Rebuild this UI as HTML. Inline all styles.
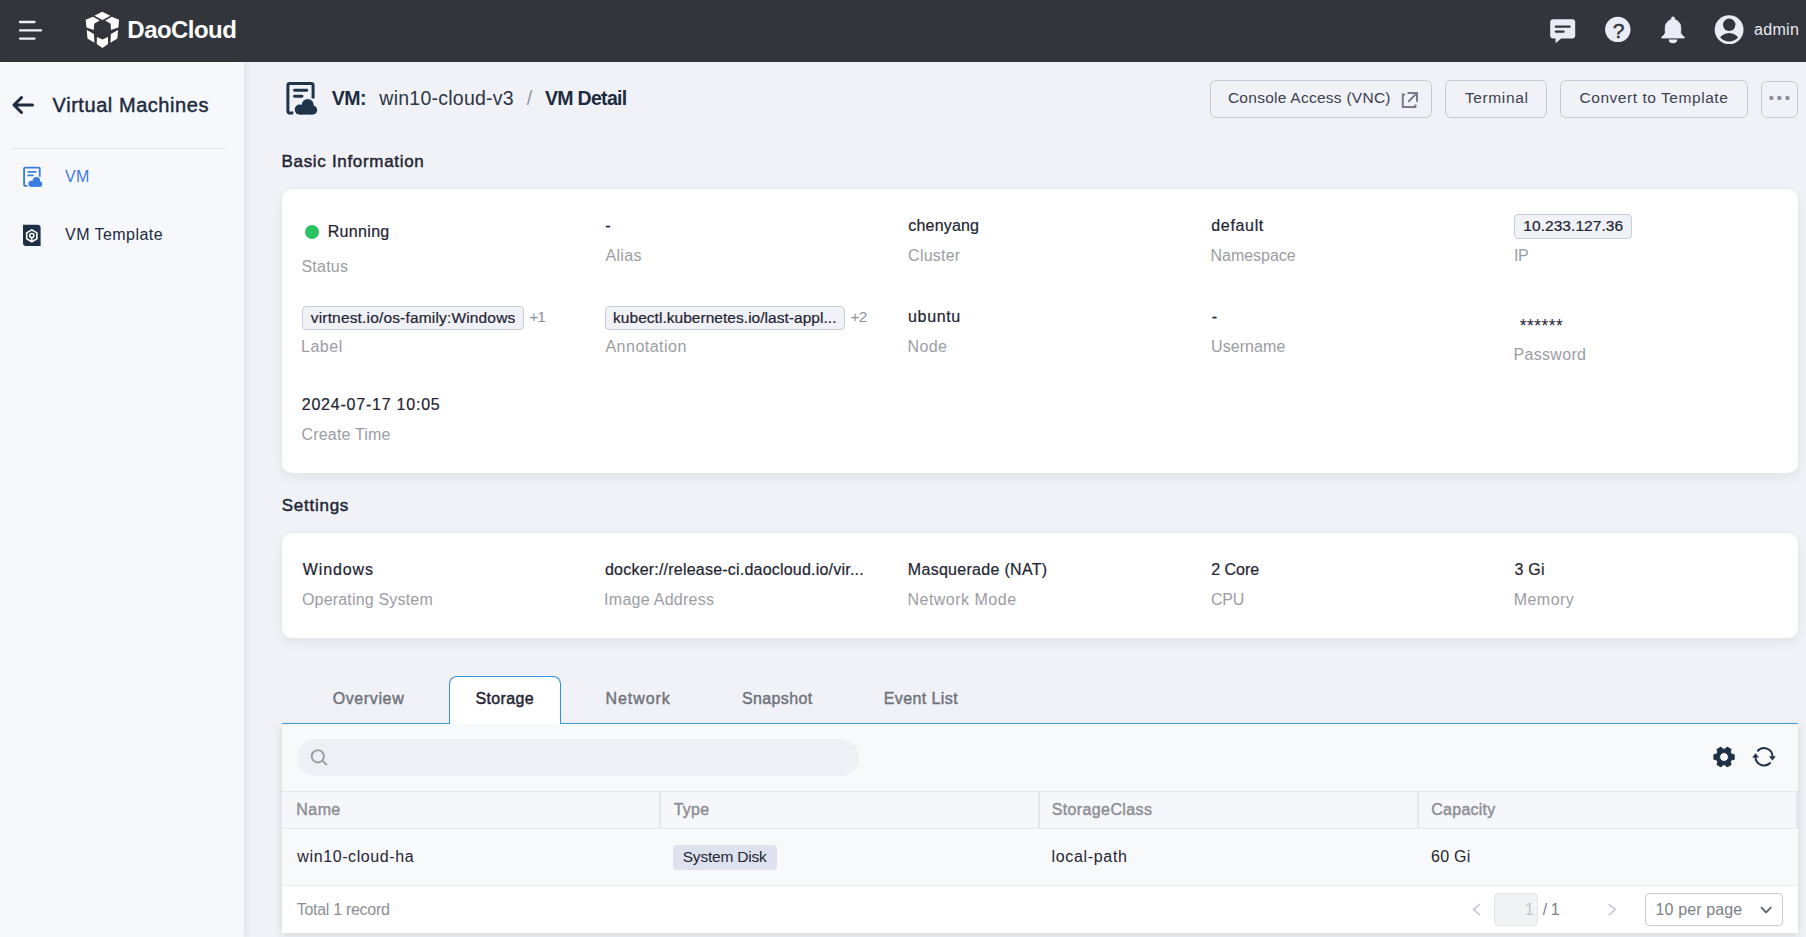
<!DOCTYPE html>
<html lang="en">
<head>
<meta charset="utf-8">
<title>VM Detail - win10-cloud-v3</title>
<style>
html,body{margin:0;padding:0;}
body{width:1806px;height:937px;overflow:hidden;position:relative;background:#f1f2f7;font-family:"Liberation Sans",sans-serif;}
.abs,.t,svg.i{position:absolute;}
.t{line-height:30px;white-space:pre;font-weight:400;}
.t.b{font-weight:700;}
.t.s{-webkit-text-stroke:0.45px currentColor;}
.t.m{-webkit-text-stroke:0.22px currentColor;}
svg.i{left:0;top:0;overflow:visible;pointer-events:none;}
#header{left:0;top:0;width:1806px;height:62px;background:#32353b;}
#sidebar{left:0;top:62px;width:244px;height:875px;background:#f7f8fc;box-shadow:1px 0 7px rgba(20,25,40,.10);}
#sbdiv{left:13px;top:148px;width:212px;height:1px;background:#e2e5eb;}
.btn{box-sizing:border-box;border:1px solid #c7cbd5;border-radius:6px;top:80px;height:38px;}
.card{left:282px;width:1516px;background:#fff;border-radius:10px;box-shadow:0 4px 12px rgba(20,25,40,.07);}
.tag{box-sizing:border-box;border:1px solid #c9cdd7;background:#f1f2f7;border-radius:4px;}
#dot{left:305px;top:224.5px;width:14px;height:14px;border-radius:50%;background:#2ac263;}
#panel{left:282px;top:724px;width:1516px;height:209px;background:#f8f9fb;box-shadow:0 2px 8px rgba(20,25,40,.13);}
#tabline{left:282px;top:723px;width:1516px;height:1px;background:#3d9be0;}
#tabact{box-sizing:border-box;left:449px;top:676px;width:112px;height:48px;background:#fff;border:1px solid #2f93dc;border-bottom:0;border-radius:8px 8px 0 0;}
#search{left:297px;top:739px;width:562px;height:36.8px;border-radius:18.4px;background:#eef0f5;}
.hl{left:282px;width:1516px;height:1px;background:#e4e7ed;}
.vl{top:792px;width:2px;height:36px;background:#e4e7ed;}
#foot{left:282px;top:886px;width:1516px;height:47px;background:#fff;}
#sdtag{left:673px;top:845px;width:104px;height:25px;border-radius:4px;background:#dde2ee;}
#pgbox{box-sizing:border-box;left:1494px;top:893px;width:44px;height:32.5px;border:1px solid #e2e4e9;background:#f1f2f4;border-radius:4px;}
#pgsel{box-sizing:border-box;left:1645px;top:893px;width:138px;height:32.5px;border:1px solid #c7cbd5;background:#fff;border-radius:4px;}
</style>
</head>
<body>
<div id="header" class="abs"></div>
<div id="sidebar" class="abs"></div>
<div id="sbdiv" class="abs"></div>

<div class="abs btn" style="left:1210px;width:222px"></div>
<div class="abs btn" style="left:1445px;width:102px"></div>
<div class="abs btn" style="left:1560px;width:188px"></div>
<div class="abs btn" style="left:1761px;width:37px;top:81px;height:36.5px"></div>

<div class="abs card" style="top:189px;height:284px"></div>
<div class="abs card" style="top:533px;height:105px"></div>
<div id="dot" class="abs"></div>
<div class="abs tag" style="left:1514px;top:214px;width:118px;height:24.6px"></div>
<div class="abs tag" style="left:302px;top:306px;width:222px;height:24px"></div>
<div class="abs tag" style="left:605px;top:306px;width:240px;height:24px"></div>

<div id="panel" class="abs"></div>
<div id="tabline" class="abs"></div>
<div id="tabact" class="abs"></div>
<div id="search" class="abs"></div>
<div class="abs" style="left:282px;top:792px;width:1516px;height:36px;background:#f6f7fa"></div>
<div class="abs hl" style="top:791px"></div>
<div class="abs hl" style="top:828px"></div>
<div class="abs vl" style="left:659px"></div>
<div class="abs vl" style="left:1038px"></div>
<div class="abs vl" style="left:1417px"></div>
<div class="abs vl" style="left:1796px"></div>
<div id="foot" class="abs"></div>
<div class="abs hl" style="top:885px;background:#e9ebf0"></div>
<div id="sdtag" class="abs"></div>
<div id="pgbox" class="abs"></div>
<div id="pgsel" class="abs"></div>

<svg class="i" width="1806" height="937" viewBox="0 0 1806 937">
<!-- hamburger -->
<g stroke="#eef0f6" stroke-width="2.3" stroke-linecap="round">
<path d="M20,22H34.5M20,30.4H41M20,38.6H34.5"/>
</g>
<!-- logo cube -->
<g fill="#ffffff" transform="translate(76,4) scale(0.0997)">
<polygon points="262,78 345,118 265,160 185,118"/>
<polygon points="97,158 170,128 238,165 182,198 178,262 105,235"/>
<polygon points="432,158 358,128 292,165 348,198 350,262 425,235"/>
<polygon points="108,262 180,300 185,388 115,345"/>
<polygon points="422,262 350,300 345,388 415,345"/>
<polygon points="210,330 265,355 320,330 322,400 265,442 208,400"/>
</g>
<!-- chat -->
<path fill="#e9ecf5" d="M1553.2,19.2H1572.2a3,3 0 0 1 3,3V35.6a3,3 0 0 1 -3,3H1561.2L1555.6,43.2V38.6H1553.2a3,3 0 0 1 -3,-3V22.2a3,3 0 0 1 3,-3Z"/>
<path stroke="#32353b" stroke-width="2.2" stroke-linecap="round" fill="none" d="M1555.8,26.7H1569.6M1555.8,31.6H1563.6"/>
<!-- help -->
<circle cx="1617.8" cy="29.4" r="12.7" fill="#e9ecf5"/>
<!-- bell -->
<g fill="#e9ecf5" stroke="#e9ecf5" stroke-width="1" stroke-linejoin="round" transform="translate(1673,0)">
<path d="M0,17.1c1,0 1.7,0.7 1.7,1.7v0.9c3.6,0.9 6,4.1 6,8.1v4.6c0,1 0.4,1.9 1.1,2.6l2.6,2.3v0.6h-22.8v-0.6l2.6,-2.3c0.7,-0.7 1.1,-1.6 1.1,-2.6v-4.6c0,-4 2.4,-7.2 6,-8.1v-0.9c0,-1 0.7,-1.7 1.7,-1.7z"/>
<path stroke="none" d="M-4.25,39.6h8.5a4.25,3.6 0 0 1 -8.5,0z"/>
</g>
<!-- user -->
<clipPath id="uc"><circle cx="1729.1" cy="29.7" r="11.9"/></clipPath>
<circle cx="1729.1" cy="29.7" r="14.4" fill="#e9ecf5"/>
<circle cx="1729.2" cy="24.8" r="6.2" fill="#32353b"/>
<ellipse cx="1729.1" cy="42.2" rx="10.6" ry="9.1" fill="#32353b" clip-path="url(#uc)"/>

<!-- back arrow -->
<path stroke="#1c2b40" stroke-width="3" stroke-linecap="round" stroke-linejoin="round" fill="none" d="M32.5,105H14M21.5,97.5L14,105L21.5,112.5"/>

<!-- title VM icon -->
<g id="vmicon">
<path fill="none" stroke="currentColor" stroke-width="3" d="M293.3,113.1H289.7a1.8,1.8 0 0 1 -1.8,-1.8V85.4a1.8,1.8 0 0 1 1.8,-1.8H311.3a1.8,1.8 0 0 1 1.8,1.8V98.4" style="color:#20344a"/>
</g>
<path fill="none" stroke="#20344a" stroke-width="2.9" stroke-linecap="round" d="M294.5,90.3H306.8M294.5,96.2H302"/>
<g fill="#20344a" stroke="#f1f2f7" stroke-width="0">
<circle cx="307.7" cy="104.9" r="6"/><circle cx="299.7" cy="109.6" r="5"/><circle cx="312.6" cy="110" r="4.6"/><rect x="299.7" y="107" width="12.9" height="7.6"/>
</g>

<!-- sidebar VM icon -->
<g transform="translate(-154.4,115.8) scale(0.62)">
<path fill="none" stroke="#3b7de0" stroke-width="3" d="M293.3,113.1H289.7a1.8,1.8 0 0 1 -1.8,-1.8V85.4a1.8,1.8 0 0 1 1.8,-1.8H311.3a1.8,1.8 0 0 1 1.8,1.8V98.4"/>
<path fill="none" stroke="#3b7de0" stroke-width="2.9" stroke-linecap="round" d="M294.5,90.3H306.8M294.5,96.2H302"/>
<g fill="#3b7de0"><circle cx="307.7" cy="104.9" r="6"/><circle cx="299.7" cy="109.6" r="5"/><circle cx="312.6" cy="110" r="4.6"/><rect x="299.7" y="107" width="12.9" height="7.6"/></g>
</g>

<!-- sidebar template icon -->
<path fill="#1f3044" d="M23,224.8H37.6a3,3 0 0 1 3,3V245.9H26a3,3 0 0 1 -3,-3Z"/>
<path fill="none" stroke="#fff" stroke-width="1.6" stroke-linejoin="round" d="M31.8,229.9L36.9,232.85V238.75L31.8,241.7L26.7,238.75V232.85Z"/>
<circle cx="31.8" cy="235.5" r="2.1" fill="none" stroke="#fff" stroke-width="1.5"/>
<path stroke="#fff" stroke-width="1.4" d="M31.8,237.6V241.5"/>

<!-- external link -->
<path fill="none" stroke="#767d88" stroke-width="2" d="M1405.1,94.6H1402.8V107H1415.4V104.4M1407.5,93H1417V101.8M1416.6,93.4L1408.3,101.7"/>
<!-- more dots -->
<g fill="#8a909c"><circle cx="1771.4" cy="98" r="2.2"/><circle cx="1779.4" cy="98" r="2.2"/><circle cx="1787.5" cy="98" r="2.2"/></g>

<!-- search -->
<g fill="none" stroke="#9ba0aa" stroke-width="2" stroke-linecap="round"><circle cx="317.8" cy="756.3" r="6.1"/><path d="M322.4,760.7L326.3,764.4"/></g>
<!-- gear -->
<path fill="#1f3146" stroke="#1f3146" stroke-width="1" stroke-linejoin="round" fill-rule="evenodd" d="M1731.37,754.04 L1734.18,754.66 L1734.18,759.34 L1731.37,759.96 L1730.28,761.86 L1731.14,764.61 L1727.09,766.95 L1725.15,764.82 L1722.95,764.82 L1721.01,766.95 L1716.96,764.61 L1717.82,761.86 L1716.73,759.96 L1713.92,759.34 L1713.92,754.66 L1716.73,754.04 L1717.82,752.14 L1716.96,749.39 L1721.01,747.05 L1722.95,749.18 L1725.15,749.18 L1727.09,747.05 L1731.14,749.39 L1730.28,752.14Z M1728.45,757.00 a4.4,4.4 0 1 0 -8.8,0 a4.4,4.4 0 1 0 8.8,0Z"/>
<!-- refresh -->
<g fill="none" stroke="#1f3146" stroke-width="2">
<path d="M1757.41,751.27A8.6,8.6 0 0 1 1772.59,756.50"/>
<path d="M1770.59,762.33A8.6,8.6 0 0 1 1755.41,757.10"/>
</g>
<path fill="#1f3146" d="M1769,756.2H1775.8L1772.4,760.4ZM1752.2,757.4H1759L1755.6,753.2Z"/>

<!-- pagination -->
<g fill="none" stroke="#c4c8d0" stroke-width="1.6"><path d="M1480,904L1473.6,909.6L1480,915.2"/><path d="M1608.8,904L1615.2,909.6L1608.8,915.2"/></g>
<path fill="none" stroke="#5d636f" stroke-width="1.8" d="M1761,907.2L1766.1,912.4L1771.2,907.2"/>
</svg>

<span class="t b" style="left:127.37px;top:15px;font-size:24px;color:#ffffff;letter-spacing:-0.549px;">DaoCloud</span>
<span class="t" style="left:1753.98px;top:15px;font-size:16px;color:#e6e9f2;letter-spacing:0.338px;">admin</span>
<span class="t s" style="left:52.61px;top:90px;font-size:20px;color:#1c2b40;letter-spacing:0.554px;">Virtual Machines</span>
<span class="t" style="left:65.04px;top:162px;font-size:16px;color:#3d7cd9;letter-spacing:0.198px;">VM</span>
<span class="t" style="left:65.04px;top:220px;font-size:16px;color:#1c2b40;letter-spacing:0.446px;">VM Template</span>
<span class="t b" style="left:331.82px;top:83px;font-size:19.5px;color:#1c2b40;letter-spacing:-0.569px;">VM:</span>
<span class="t" style="left:379.37px;top:83px;font-size:19.5px;color:#2b3546;letter-spacing:0.239px;">win10-cloud-v3</span>
<span class="t" style="left:526.67px;top:83px;font-size:19.5px;color:#9297a1;">/</span>
<span class="t b" style="left:544.92px;top:83px;font-size:19.5px;color:#1c2b40;letter-spacing:-0.676px;">VM Detail</span>
<span class="t" style="left:1227.91px;top:83px;font-size:15.5px;color:#3a4150;letter-spacing:0.262px;">Console Access (VNC)</span>
<span class="t" style="left:1464.91px;top:83px;font-size:15.5px;color:#3a4150;letter-spacing:0.627px;">Terminal</span>
<span class="t" style="left:1579.51px;top:83px;font-size:15.5px;color:#3a4150;letter-spacing:0.547px;">Convert to Template</span>
<span class="t s" style="left:281.47px;top:147px;font-size:17px;color:#1f2533;letter-spacing:0.686px;">Basic Information</span>
<span class="t s" style="left:281.75px;top:491px;font-size:17px;color:#1f2533;letter-spacing:0.739px;">Settings</span>
<span class="t m" style="left:327.74px;top:217px;font-size:16px;color:#1f2533;letter-spacing:0.318px;">Running</span>
<span class="t" style="left:301.45px;top:252px;font-size:16px;color:#9b9da4;letter-spacing:0.231px;">Status</span>
<span class="t m" style="left:605.28px;top:211px;font-size:16px;color:#1f2533;">-</span>
<span class="t" style="left:605.44px;top:241px;font-size:16px;color:#9b9da4;letter-spacing:0.322px;">Alias</span>
<span class="t m" style="left:908.30px;top:211px;font-size:16px;color:#1f2533;letter-spacing:0.181px;">chenyang</span>
<span class="t" style="left:908.11px;top:241px;font-size:16px;color:#9b9da4;letter-spacing:0.230px;">Cluster</span>
<span class="t m" style="left:1211.30px;top:211px;font-size:16px;color:#1f2533;letter-spacing:0.659px;">default</span>
<span class="t" style="left:1210.54px;top:241px;font-size:16px;color:#9b9da4;letter-spacing:-0.035px;">Namespace</span>
<span class="t m" style="left:1523.29px;top:211px;font-size:15.5px;color:#1f2533;letter-spacing:0.060px;">10.233.127.36</span>
<span class="t" style="left:1513.89px;top:241px;font-size:16px;color:#9b9da4;letter-spacing:-0.386px;">IP</span>
<span class="t m" style="left:310.79px;top:303px;font-size:15.5px;color:#1f2533;letter-spacing:0.166px;">virtnest.io/os-family:Windows</span>
<span class="t" style="left:529.25px;top:302px;font-size:15.5px;color:#8f939d;letter-spacing:-0.969px;">+1</span>
<span class="t" style="left:301.04px;top:332px;font-size:16px;color:#9b9da4;letter-spacing:0.500px;">Label</span>
<span class="t m" style="left:613.06px;top:303px;font-size:15.5px;color:#1f2533;letter-spacing:0.035px;">kubectl.kubernetes.io/last-appl...</span>
<span class="t" style="left:850.55px;top:302px;font-size:15.5px;color:#8f939d;letter-spacing:-0.757px;">+2</span>
<span class="t" style="left:605.44px;top:332px;font-size:16px;color:#9b9da4;letter-spacing:0.490px;">Annotation</span>
<span class="t m" style="left:908.06px;top:302px;font-size:16px;color:#1f2533;letter-spacing:0.657px;">ubuntu</span>
<span class="t" style="left:907.54px;top:332px;font-size:16px;color:#9b9da4;letter-spacing:0.385px;">Node</span>
<span class="t m" style="left:1211.68px;top:302px;font-size:16px;color:#1f2533;">-</span>
<span class="t" style="left:1211.04px;top:332px;font-size:16px;color:#9b9da4;letter-spacing:0.067px;">Username</span>
<span class="t" style="left:1519.73px;top:311px;font-size:17.5px;color:#1f2533;letter-spacing:0.439px;">******</span>
<span class="t" style="left:1513.54px;top:340px;font-size:16px;color:#9b9da4;letter-spacing:0.316px;">Password</span>
<span class="t m" style="left:301.73px;top:390px;font-size:16px;color:#1f2533;letter-spacing:0.778px;">2024-07-17 10:05</span>
<span class="t" style="left:301.61px;top:420px;font-size:16px;color:#9b9da4;letter-spacing:0.159px;">Create Time</span>
<span class="t m" style="left:302.79px;top:555px;font-size:16px;color:#1f2533;letter-spacing:0.872px;">Windows</span>
<span class="t" style="left:301.93px;top:585px;font-size:16px;color:#9b9da4;letter-spacing:0.186px;">Operating System</span>
<span class="t m" style="left:605.00px;top:555px;font-size:16px;color:#1f2533;letter-spacing:0.213px;">docker://release-ci.daocloud.io/vir...</span>
<span class="t" style="left:604.09px;top:585px;font-size:16px;color:#9b9da4;letter-spacing:0.269px;">Image Address</span>
<span class="t m" style="left:907.84px;top:555px;font-size:16px;color:#1f2533;letter-spacing:0.292px;">Masquerade (NAT)</span>
<span class="t" style="left:907.44px;top:585px;font-size:16px;color:#9b9da4;letter-spacing:0.496px;">Network Mode</span>
<span class="t m" style="left:1211.23px;top:555px;font-size:16px;color:#1f2533;">2 Core</span>
<span class="t" style="left:1211.11px;top:585px;font-size:16px;color:#9b9da4;letter-spacing:-0.325px;">CPU</span>
<span class="t m" style="left:1514.43px;top:555px;font-size:16px;color:#1f2533;letter-spacing:0.246px;">3 Gi</span>
<span class="t" style="left:1513.74px;top:585px;font-size:16px;color:#9b9da4;letter-spacing:0.449px;">Memory</span>
<span class="t s" style="left:332.64px;top:684px;font-size:16px;color:#70747c;letter-spacing:0.627px;">Overview</span>
<span class="t s" style="left:475.53px;top:684px;font-size:16px;color:#1f2533;letter-spacing:0.355px;">Storage</span>
<span class="t s" style="left:605.47px;top:684px;font-size:16px;color:#70747c;letter-spacing:0.942px;">Network</span>
<span class="t s" style="left:742.03px;top:684px;font-size:16px;color:#70747c;letter-spacing:0.370px;">Snapshot</span>
<span class="t s" style="left:883.77px;top:684px;font-size:16px;color:#70747c;letter-spacing:0.402px;">Event List</span>
<span class="t s" style="left:296.37px;top:795px;font-size:16px;color:#8d8f95;letter-spacing:0.408px;">Name</span>
<span class="t s" style="left:673.67px;top:795px;font-size:16px;color:#8d8f95;letter-spacing:0.242px;">Type</span>
<span class="t s" style="left:1051.73px;top:795px;font-size:16px;color:#8d8f95;letter-spacing:0.376px;">StorageClass</span>
<span class="t s" style="left:1431.30px;top:795px;font-size:16px;color:#8d8f95;letter-spacing:0.253px;">Capacity</span>
<span class="t" style="left:297.37px;top:842px;font-size:16px;color:#1f2533;letter-spacing:0.599px;">win10-cloud-ha</span>
<span class="t" style="left:682.71px;top:842px;font-size:15.5px;color:#1f2533;letter-spacing:-0.197px;">System Disk</span>
<span class="t" style="left:1051.49px;top:842px;font-size:16px;color:#1f2533;letter-spacing:0.674px;">local-path</span>
<span class="t" style="left:1431.11px;top:842px;font-size:16px;color:#1f2533;letter-spacing:0.215px;">60 Gi</span>
<span class="t" style="left:296.79px;top:895px;font-size:16px;color:#8d8f95;letter-spacing:-0.300px;">Total 1 record</span>
<span class="t" style="left:1525.04px;top:895px;font-size:16px;color:#c3c6cd;">1</span>
<span class="t" style="left:1542.67px;top:895px;font-size:16px;color:#7c818b;letter-spacing:-0.411px;">/ 1</span>
<span class="t" style="left:1655.54px;top:895px;font-size:16px;color:#7c818b;letter-spacing:0.132px;">10 per page</span>
<span class="t s" style="left:1612.69px;top:16px;font-size:21px;color:#32353b;">?</span>
</body>
</html>
